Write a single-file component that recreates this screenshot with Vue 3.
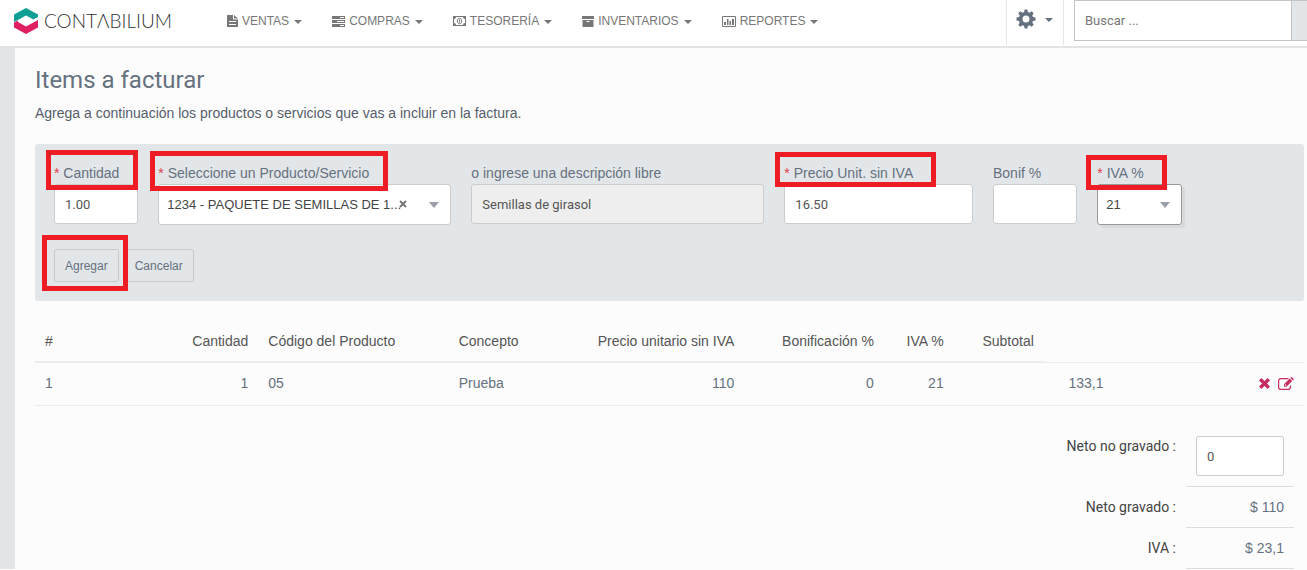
<script setup>
import { ref } from 'vue'

const menu = [
  { label: 'VENTAS', icon: 'file' },
  { label: 'COMPRAS', icon: 'tasks' },
  { label: 'TESORERÍA', icon: 'money' },
  { label: 'INVENTARIOS', icon: 'archive' },
  { label: 'REPORTES', icon: 'chart' },
]

const cantidad = ref('1.00')
const producto = ref('1234')
const descripcion = ref('Semillas de girasol')
const precio = ref('16.50')
const bonif = ref('')
const iva = ref('21')
const noGravado = ref('0')

const items = [
  { n: 1, cantidad: 1, codigo: '05', concepto: 'Prueba', precio: '110', bonif: 0, iva: 21, subtotal: '133,1' },
]
</script>

<template>
  <div class="app">
    <header class="topbar">
      <a class="brand" href="#" aria-label="Contabilium">
        <svg width="24" height="26" viewBox="0 0 24 26" aria-hidden="true">
          <path fill="#0f9f95" d="M12 0 24 6.500V9L19.500 11.500 12 7.500 4 12 0 14V6.500Z" />
          <path fill="#e01e63" d="M12 26 0 19.500V14.500L4 12.500V14L12 18.500 24 12V19.500Z" />
        </svg>
        <span>CONTΛBILIUM</span>
      </a>
      <nav class="menu">
        <a v-for="m in menu" :key="m.label" href="#">
          <svg v-if="m.icon === 'file'" width="11" height="12" viewBox="0 0 11 12">
            <path fill="currentColor" fill-rule="evenodd" d="M0 0H6V4.500H11V12H0ZM2 6V7H9V6ZM2 9V10H9V9Z" />
            <path fill="currentColor" d="M7 0 11 3.500H7Z" />
          </svg>
          <svg v-else-if="m.icon === 'tasks'" width="13" height="11" viewBox="0 0 13 11">
            <path fill="currentColor" fill-rule="evenodd" d="M0 0H13V3H0ZM8 1V2H12V1ZM0 4H13V7H0ZM5 5V6H12V5ZM0 8H13V11H0ZM8 9V10H12V9Z" />
          </svg>
          <svg v-else-if="m.icon === 'money'" width="13" height="10" viewBox="0 0 13 10">
            <path fill="currentColor" fill-rule="evenodd" d="M0 0H13V10H0ZM3 1A2 2 0 0 1 1 3V7A2 2 0 0 1 3 9H10A2 2 0 0 1 12 7V3A2 2 0 0 1 10 1Z" />
            <path fill="none" stroke="currentColor" d="M6.500 2.300C7.900 2.300 8.700 3.500 8.700 5S7.900 7.700 6.500 7.700 4.300 6.500 4.300 5 5.100 2.300 6.500 2.300ZM6.500 3.500V6.500" />
          </svg>
          <svg v-else-if="m.icon === 'archive'" width="12" height="11" viewBox="0 0 12 11">
            <path fill="currentColor" fill-rule="evenodd" d="M0 0H12V3H0ZM.5 4H11.500V11H.5ZM4.500 5V6H7.500V5Z" />
          </svg>
          <svg v-else width="14" height="11" viewBox="0 0 14 11">
            <path fill="none" stroke="currentColor" d="M.5 .5H13.500V10.500H.5Z" />
            <path fill="currentColor" d="M2 6H4V9H2ZM5 3H6.500V9H5ZM7.500 5H9V9H7.500ZM10 3H12V9H10Z" />
          </svg>
          <span>{{ m.label }}</span>
          <i class="caret"></i>
        </a>
      </nav>
      <button class="settings" type="button" aria-label="Configuración">
        <svg width="20" height="20" viewBox="0 0 20 20" aria-hidden="true">
          <path fill="currentColor" fill-rule="evenodd" d="M8.600 .5H11.400L11.900 3 13.500 3.700 15.700 2.300 17.700 4.300 16.300 6.500 17 8.100 19.500 8.600V11.400L17 11.900 16.300 13.500 17.700 15.700 15.700 17.700 13.500 16.300 11.900 17 11.400 19.500H8.600L8.100 17 6.500 16.300 4.300 17.700 2.300 15.700 3.700 13.500 3 11.900 .5 11.400V8.600L3 8.100 3.700 6.500 2.300 4.300 4.300 2.300 6.500 3.700 8.100 3ZM10 6.500A3.500 3.500 0 1 0 10 13.500 3.500 3.500 0 0 0 10 6.500Z" />
        </svg>
        <i class="caret"></i>
      </button>
      <form class="search">
        <input type="text" placeholder="Buscar ..." aria-label="Buscar" />
        <span class="addon"></span>
      </form>
    </header>

    <main class="content">
      <h1>Items a facturar</h1>
      <p class="intro">Agrega a continuación los productos o servicios que vas a incluir en la factura.</p>

      <form class="panel" @submit.prevent>
        <div class="fields">
          <div class="field">
            <label class="marked mark-cantidad" for="cantidad"><b>*</b> Cantidad</label>
            <input id="cantidad" v-model="cantidad" type="text" />
          </div>
          <div class="field span3">
            <label class="marked mark-producto" for="producto"><b>*</b> Seleccione un Producto/Servicio</label>
            <div class="select">
              <select id="producto" v-model="producto" class="clearable">
                <option value="1234">1234 - PAQUETE DE SEMILLAS DE 1...</option>
              </select>
              <button class="clear" type="button" aria-label="Quitar producto">
                <svg width="8" height="8" viewBox="0 0 8 8"><path stroke="currentColor" stroke-width="2" d="M1 1 7 7M7 1 1 7" /></svg>
              </button>
            </div>
          </div>
          <div class="field span3">
            <label for="descripcion">o ingrese una descripción libre</label>
            <input id="descripcion" v-model="descripcion" type="text" disabled />
          </div>
          <div class="field span2">
            <label class="marked mark-precio" for="precio"><b>*</b> Precio Unit. sin IVA</label>
            <input id="precio" v-model="precio" type="text" />
          </div>
          <div class="field">
            <label for="bonif">Bonif %</label>
            <input id="bonif" v-model="bonif" type="text" />
          </div>
          <div class="field">
            <label class="marked mark-iva" for="iva"><b>*</b> IVA %</label>
            <div class="select">
              <select id="iva" v-model="iva" class="active">
                <option value="21">21</option>
              </select>
            </div>
          </div>
        </div>
        <div class="actions">
          <span class="marked mark-agregar"><button type="submit">Agregar</button></span>
          <button type="button">Cancelar</button>
        </div>
      </form>

      <table class="items">
        <colgroup>
          <col class="w-n" /><col class="w-cant" /><col class="w-wide" /><col class="w-concept" /><col class="w-price" />
          <col class="w-bonif" /><col class="w-n" /><col class="w-sub" /><col class="w-n" /><col class="w-wide" />
        </colgroup>
        <thead>
          <tr>
            <th>#</th>
            <th class="num">Cantidad</th>
            <th>Código del Producto</th>
            <th>Concepto</th>
            <th class="num">Precio unitario sin IVA</th>
            <th class="num">Bonificación %</th>
            <th class="num">IVA %</th>
            <th class="num">Subtotal</th>
            <td colspan="2"></td>
          </tr>
        </thead>
        <tbody>
          <tr v-for="it in items" :key="it.n">
            <td>{{ it.n }}</td>
            <td class="num">{{ it.cantidad }}</td>
            <td>{{ it.codigo }}</td>
            <td>{{ it.concepto }}</td>
            <td class="num">{{ it.precio }}</td>
            <td class="num">{{ it.bonif }}</td>
            <td class="num">{{ it.iva }}</td>
            <td colspan="2" class="num">{{ it.subtotal }}</td>
            <td class="tools">
              <div>
                <button type="button" aria-label="Eliminar">
                  <svg width="11" height="11" viewBox="0 0 11 11"><path stroke="currentColor" stroke-width="3.400" d="M1.200 1.200 9.800 9.800M9.800 1.200 1.200 9.800" /></svg>
                </button>
                <button type="button" aria-label="Editar">
                  <svg width="16" height="13" viewBox="0 0 16 13">
                    <path fill="none" stroke="currentColor" stroke-width="1.200" d="M10.500 1.600H2.800A2.200 2.200 0 0 0 .6 3.800V10.200A2.200 2.200 0 0 0 2.800 12.400H10.200A2.200 2.200 0 0 0 12.400 10.200V8.500" />
                    <path fill="currentColor" fill-rule="evenodd" d="M11.700 1.600 14.200 4.100 8.500 9.800H6V7.300ZM7 7.800V8.800H8L8.500 8.300 7.500 7.300ZM12.400 .9 13 .3Q13.500 -.1 14 .3L15.500 1.800Q15.900 2.300 15.500 2.800L14.900 3.400Z" />
                  </svg>
                </button>
              </div>
            </td>
          </tr>
        </tbody>
      </table>

      <table class="totals">
        <tbody>
          <tr>
            <th scope="row"><label for="nogravado">Neto no gravado :</label></th>
            <td><input id="nogravado" v-model="noGravado" type="text" /></td>
          </tr>
          <tr>
            <th scope="row">Neto gravado :</th>
            <td>$ 110</td>
          </tr>
          <tr>
            <th scope="row">IVA :</th>
            <td>$ 23,1</td>
          </tr>
        </tbody>
      </table>
    </main>
  </div>
</template>

<style>
html,
body {
  background: #fcfcfc;
}
body {
  margin: 0;
}
</style>

<style scoped>
.app,
.app * {
  box-sizing: border-box;
}
.app {
  font: 14px/20px "Liberation Sans", Arial, sans-serif;
  color: #667180;
}
button,
input,
select {
  margin: 0;
  font: inherit;
  color: inherit;
}
a {
  color: inherit;
  text-decoration: none;
}
svg {
  display: block;
  flex: none;
}
.topbar {
  display: flex;
  align-items: flex-start;
  height: 48px;
  background: #fff;
  border-bottom: 2px solid #e4e4e4;
}
.brand {
  display: flex;
  align-items: center;
  gap: 6px;
  width: 212px;
  height: 42px;
  padding-left: 14px;
  font: 300 19px/26px Lato, sans-serif;
  color: #333;
}
.menu {
  display: flex;
  flex: 1;
  gap: 30px;
  padding-left: 15px;
}
.menu a {
  display: flex;
  align-items: center;
  gap: 4px;
  height: 42px;
  font-size: 12px;
  color: #777;
}
.caret {
  border: 4px solid transparent;
  border-top-color: currentColor;
  border-bottom: 0;
  margin: 2px 0 0 1px;
}
.settings {
  display: flex;
  align-items: center;
  gap: 8px;
  width: 58px;
  height: 45px;
  padding: 0 0 8px 9px;
  background: none;
  border: solid #e7e7e7;
  border-width: 0 1px;
}
.search {
  display: flex;
  width: 243px;
  height: 41px;
  padding-left: 10px;
}
.search input {
  flex: 1;
  min-width: 0;
  padding: 0 10px;
  border: 1px solid #c5c5c5;
  background: #fff;
  font: 13px/20px Roboto, sans-serif;
}
.search input::placeholder {
  color: #777;
}
.addon {
  width: 15px;
  background: #e2e6e9;
  border: solid #c5c5c5;
  border-width: 1px 0;
}
.content {
  border-left: 15px solid #e2e6e9;
  padding: 17px 3px 0 20px;
}
h1 {
  margin: 0;
  font: 400 24px/30px Roboto, sans-serif;
}
.intro {
  margin: 8px 0 21px;
  color: #565e6b;
}
.panel {
  padding: 19px 18px 19px 19px;
  background: #e2e6e9;
  border-radius: 3px;
}
.fields {
  display: grid;
  grid-template-columns: repeat(12, 1fr);
  gap: 20px;
}
.field {
  min-width: 0;
}
.span2 {
  grid-column: span 2;
}
.span3 {
  grid-column: span 3;
}
.field label {
  display: block;
  width: max-content;
  margin-bottom: 1px;
}
label b {
  font-weight: 400;
  color: #e0404a;
}
.field input,
.totals input {
  display: block;
  width: 100%;
  height: 40px;
  padding: 0 10px;
  border: 1px solid #ccc;
  border-radius: 3px;
  background: #fff;
  font: 13px/20px Roboto, sans-serif;
  color: #555;
}
.field input:disabled {
  background: #eee;
}
.select {
  position: relative;
}
.select::after {
  content: "";
  position: absolute;
  top: 18px;
  right: 12px;
  border: 5px solid transparent;
  border-top: 6px solid #999ea8;
  border-bottom: 0;
}
.select select {
  display: block;
  width: 100%;
  height: 41px;
  padding: 0 30px 0 8px;
  appearance: none;
  border: 1px solid #ccc;
  border-radius: 3px;
  background: #fff;
  font-size: 13px;
  color: #444;
}
.select .active {
  border-color: #999;
  box-shadow: 3px 3px 0 #d8dadd;
}
.clear {
  position: absolute;
  top: 16px;
  right: 44px;
  padding: 0;
  border: 0;
  background: none;
  color: #777;
}
.actions {
  display: flex;
  gap: 5px;
  padding-top: 24px;
}
.actions button {
  display: block;
  height: 33px;
  padding: 0 10px;
  border: 1px solid #c7cacd;
  border-radius: 2px;
  background: transparent;
  font-size: 12px;
}

/* Red highlight frames laid over the required steps */
.marked {
  position: relative;
}
.marked::after {
  content: "";
  position: absolute;
  z-index: 2;
  border: 5px solid #ee1c24;
  pointer-events: none;
}
.mark-cantidad::after {
  inset: -13px -19px -7px -8px;
}
.mark-producto::after {
  inset: -12px -19px -8px -8px;
}
.mark-precio::after {
  inset: -11px -23px -4px -9px;
}
.mark-iva::after {
  inset: -8px -23px -7px -11px;
}
.mark-agregar::after {
  inset: -14px -9px -9px -12px;
}

.items {
  width: 100%;
  margin-top: 20px;
  table-layout: fixed;
  border-spacing: 0;
}
.w-n { width: 5.500%; }
.w-cant { width: 12.100%; }
.w-wide { width: 15%; }
.w-concept { width: 10.900%; }
.w-price { width: 12.400%; }
.w-bonif { width: 11%; }
.w-sub { width: 7.100%; }
.items th,
.items td {
  padding: 10px;
  text-align: left;
  white-space: nowrap;
}
.items th {
  font-weight: 400;
  color: #555;
  border-bottom: 2px solid #ececec;
}
.items td {
  border-bottom: 1px solid #ececec;
}
.items tbody td {
  padding: 10px 10px 12px;
}
.items .num {
  text-align: right;
}
.tools div {
  display: flex;
  justify-content: flex-end;
  align-items: center;
  gap: 8px;
}
.tools button {
  padding: 0;
  border: 0;
  background: none;
  color: #c52e5e;
}
.totals {
  width: 100%;
  margin-top: 20px;
  padding-right: 10px;
  border-spacing: 0;
}
.totals th {
  padding: 10px;
  text-align: right;
  vertical-align: top;
  font: 400 14px/20px Roboto, sans-serif;
  color: #444;
}
.totals td {
  width: 108px;
  padding: 10px;
  text-align: right;
  border-bottom: 1px solid #ddd;
}
</style>
